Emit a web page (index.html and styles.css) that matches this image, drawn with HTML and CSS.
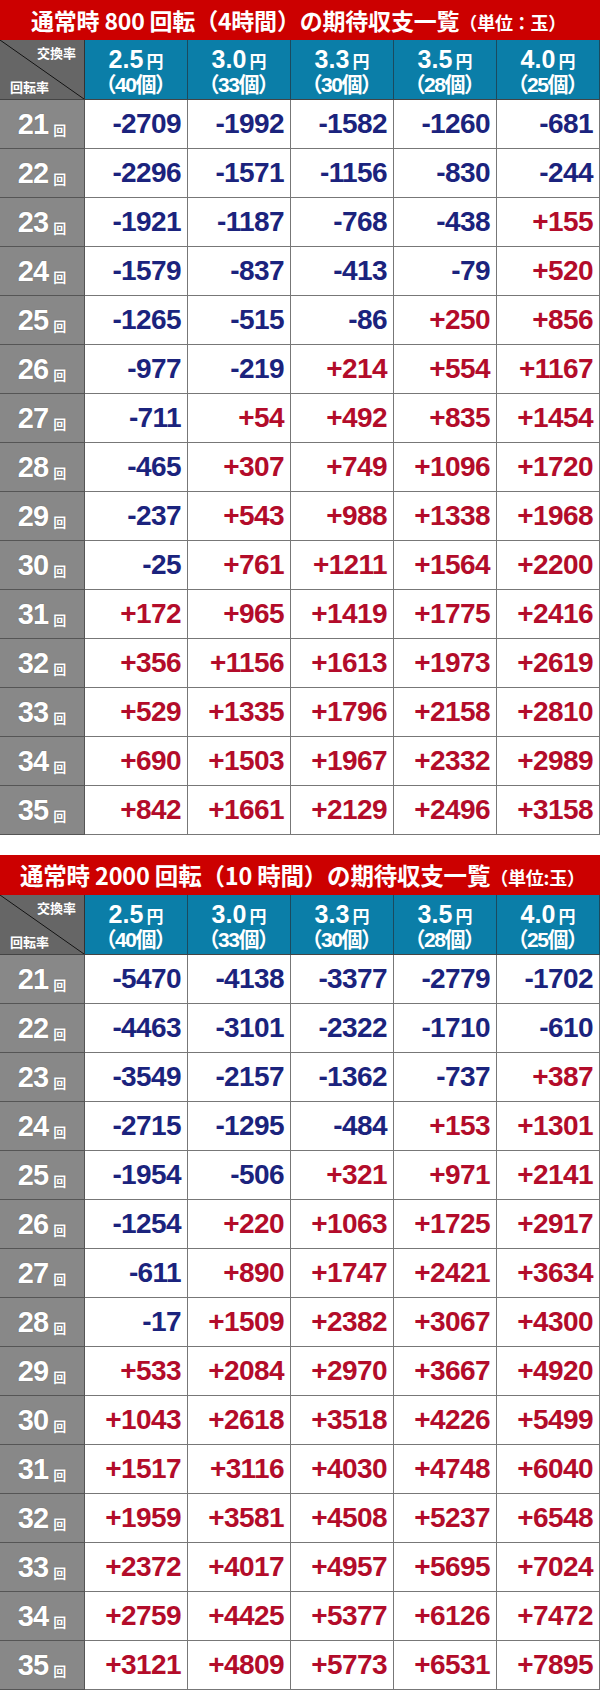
FILE: index.html
```html
<!DOCTYPE html>
<html lang="ja">
<head>
<meta charset="utf-8">
<title>期待収支一覧</title>
<link rel="stylesheet" href="styles.css">
</head>
<body>
<section class="block">
  <h2 class="title">通常時 800 回転（4時間）の期待収支一覧<span class="unit">（単位：玉）</span></h2>
  <div class="grid">
    <div class="corner"><span class="c-top">交換率</span><span class="c-bot">回転率</span></div>
    <div class="hd"><div class="rate">2.5<span class="yen">円</span></div><div class="cnt">（40個）</div></div>
    <div class="hd"><div class="rate">3.0<span class="yen">円</span></div><div class="cnt">（33個）</div></div>
    <div class="hd"><div class="rate">3.3<span class="yen">円</span></div><div class="cnt">（30個）</div></div>
    <div class="hd"><div class="rate">3.5<span class="yen">円</span></div><div class="cnt">（28個）</div></div>
    <div class="hd"><div class="rate">4.0<span class="yen">円</span></div><div class="cnt">（25個）</div></div>

    <div class="rl">21<span class="kai">回</span></div><div class="v m">-2709</div><div class="v m">-1992</div><div class="v m">-1582</div><div class="v m">-1260</div><div class="v m">-681</div>
    <div class="rl">22<span class="kai">回</span></div><div class="v m">-2296</div><div class="v m">-1571</div><div class="v m">-1156</div><div class="v m">-830</div><div class="v m">-244</div>
    <div class="rl">23<span class="kai">回</span></div><div class="v m">-1921</div><div class="v m">-1187</div><div class="v m">-768</div><div class="v m">-438</div><div class="v p">+155</div>
    <div class="rl">24<span class="kai">回</span></div><div class="v m">-1579</div><div class="v m">-837</div><div class="v m">-413</div><div class="v m">-79</div><div class="v p">+520</div>
    <div class="rl">25<span class="kai">回</span></div><div class="v m">-1265</div><div class="v m">-515</div><div class="v m">-86</div><div class="v p">+250</div><div class="v p">+856</div>
    <div class="rl">26<span class="kai">回</span></div><div class="v m">-977</div><div class="v m">-219</div><div class="v p">+214</div><div class="v p">+554</div><div class="v p">+1167</div>
    <div class="rl">27<span class="kai">回</span></div><div class="v m">-711</div><div class="v p">+54</div><div class="v p">+492</div><div class="v p">+835</div><div class="v p">+1454</div>
    <div class="rl">28<span class="kai">回</span></div><div class="v m">-465</div><div class="v p">+307</div><div class="v p">+749</div><div class="v p">+1096</div><div class="v p">+1720</div>
    <div class="rl">29<span class="kai">回</span></div><div class="v m">-237</div><div class="v p">+543</div><div class="v p">+988</div><div class="v p">+1338</div><div class="v p">+1968</div>
    <div class="rl">30<span class="kai">回</span></div><div class="v m">-25</div><div class="v p">+761</div><div class="v p">+1211</div><div class="v p">+1564</div><div class="v p">+2200</div>
    <div class="rl">31<span class="kai">回</span></div><div class="v p">+172</div><div class="v p">+965</div><div class="v p">+1419</div><div class="v p">+1775</div><div class="v p">+2416</div>
    <div class="rl">32<span class="kai">回</span></div><div class="v p">+356</div><div class="v p">+1156</div><div class="v p">+1613</div><div class="v p">+1973</div><div class="v p">+2619</div>
    <div class="rl">33<span class="kai">回</span></div><div class="v p">+529</div><div class="v p">+1335</div><div class="v p">+1796</div><div class="v p">+2158</div><div class="v p">+2810</div>
    <div class="rl">34<span class="kai">回</span></div><div class="v p">+690</div><div class="v p">+1503</div><div class="v p">+1967</div><div class="v p">+2332</div><div class="v p">+2989</div>
    <div class="rl">35<span class="kai">回</span></div><div class="v p">+842</div><div class="v p">+1661</div><div class="v p">+2129</div><div class="v p">+2496</div><div class="v p">+3158</div>
  </div>
</section>

<section class="block second">
  <h2 class="title t2">通常時 2000 回転（10 時間）の期待収支一覧<span class="unit">（単位:玉）</span></h2>
  <div class="grid">
    <div class="corner"><span class="c-top">交換率</span><span class="c-bot">回転率</span></div>
    <div class="hd"><div class="rate">2.5<span class="yen">円</span></div><div class="cnt">（40個）</div></div>
    <div class="hd"><div class="rate">3.0<span class="yen">円</span></div><div class="cnt">（33個）</div></div>
    <div class="hd"><div class="rate">3.3<span class="yen">円</span></div><div class="cnt">（30個）</div></div>
    <div class="hd"><div class="rate">3.5<span class="yen">円</span></div><div class="cnt">（28個）</div></div>
    <div class="hd"><div class="rate">4.0<span class="yen">円</span></div><div class="cnt">（25個）</div></div>

    <div class="rl">21<span class="kai">回</span></div><div class="v m">-5470</div><div class="v m">-4138</div><div class="v m">-3377</div><div class="v m">-2779</div><div class="v m">-1702</div>
    <div class="rl">22<span class="kai">回</span></div><div class="v m">-4463</div><div class="v m">-3101</div><div class="v m">-2322</div><div class="v m">-1710</div><div class="v m">-610</div>
    <div class="rl">23<span class="kai">回</span></div><div class="v m">-3549</div><div class="v m">-2157</div><div class="v m">-1362</div><div class="v m">-737</div><div class="v p">+387</div>
    <div class="rl">24<span class="kai">回</span></div><div class="v m">-2715</div><div class="v m">-1295</div><div class="v m">-484</div><div class="v p">+153</div><div class="v p">+1301</div>
    <div class="rl">25<span class="kai">回</span></div><div class="v m">-1954</div><div class="v m">-506</div><div class="v p">+321</div><div class="v p">+971</div><div class="v p">+2141</div>
    <div class="rl">26<span class="kai">回</span></div><div class="v m">-1254</div><div class="v p">+220</div><div class="v p">+1063</div><div class="v p">+1725</div><div class="v p">+2917</div>
    <div class="rl">27<span class="kai">回</span></div><div class="v m">-611</div><div class="v p">+890</div><div class="v p">+1747</div><div class="v p">+2421</div><div class="v p">+3634</div>
    <div class="rl">28<span class="kai">回</span></div><div class="v m">-17</div><div class="v p">+1509</div><div class="v p">+2382</div><div class="v p">+3067</div><div class="v p">+4300</div>
    <div class="rl">29<span class="kai">回</span></div><div class="v p">+533</div><div class="v p">+2084</div><div class="v p">+2970</div><div class="v p">+3667</div><div class="v p">+4920</div>
    <div class="rl">30<span class="kai">回</span></div><div class="v p">+1043</div><div class="v p">+2618</div><div class="v p">+3518</div><div class="v p">+4226</div><div class="v p">+5499</div>
    <div class="rl">31<span class="kai">回</span></div><div class="v p">+1517</div><div class="v p">+3116</div><div class="v p">+4030</div><div class="v p">+4748</div><div class="v p">+6040</div>
    <div class="rl">32<span class="kai">回</span></div><div class="v p">+1959</div><div class="v p">+3581</div><div class="v p">+4508</div><div class="v p">+5237</div><div class="v p">+6548</div>
    <div class="rl">33<span class="kai">回</span></div><div class="v p">+2372</div><div class="v p">+4017</div><div class="v p">+4957</div><div class="v p">+5695</div><div class="v p">+7024</div>
    <div class="rl">34<span class="kai">回</span></div><div class="v p">+2759</div><div class="v p">+4425</div><div class="v p">+5377</div><div class="v p">+6126</div><div class="v p">+7472</div>
    <div class="rl">35<span class="kai">回</span></div><div class="v p">+3121</div><div class="v p">+4809</div><div class="v p">+5773</div><div class="v p">+6531</div><div class="v p">+7895</div>
  </div>
</section>
</body>
</html>
```

FILE: styles.css
```css
html, body {
  margin: 0;
  padding: 0;
  background: #ffffff;
}
body {
  width: 600px;
  font-family: "Liberation Sans", "Noto Sans CJK JP", sans-serif;
}
.block {
  width: 600px;
}
.second {
  margin-top: 20px;
}
.title {
  margin: 0;
  height: 40px;
  background: #cc0000;
  color: #ffffff;
  font-family: "Noto Sans CJK JP", sans-serif;
  font-weight: 700;
  font-size: 23px;
  line-height: 40px;
  padding-left: 31px;
  white-space: nowrap;
  letter-spacing: -0.2px;
}
.t2 {
  padding-left: 20px;
  font-size: 23.5px;
}
.unit {
  font-size: 18px;
}
.grid {
  display: grid;
  grid-template-columns: 85px repeat(5, 103px);
  grid-template-rows: 60px;
  grid-auto-rows: 49px;
}
.grid > div {
  box-sizing: border-box;
  border-right: 1px solid #777777;
  border-bottom: 1px solid #777777;
}
.corner {
  position: relative;
  background: linear-gradient(to top right, #666666 calc(50% - 0.8px), #111111 50%, #666666 calc(50% + 0.8px));
  color: #ffffff;
  font-family: "Noto Sans CJK JP", sans-serif;
  font-weight: 700;
  font-size: 13px;
  line-height: 1;
  border-right-color: #333333 !important;
  border-bottom-color: #444444 !important;
}
.c-top {
  position: absolute;
  top: 6px;
  right: 8px;
}
.c-bot {
  position: absolute;
  left: 10px;
  bottom: 6px;
}
.hd {
  background: #0b7ea8;
  color: #ffffff;
  text-align: center;
  font-weight: 700;
  border-right-color: #1b4a5e !important;
  border-bottom-color: #444444 !important;
  padding-top: 7px;
}
.rate {
  font-family: "Liberation Sans", sans-serif;
  font-size: 25px;
  line-height: 24px;
}
.yen {
  font-family: "Noto Sans CJK JP", sans-serif;
  font-size: 17px;
  margin-left: 3px;
}
.cnt {
  font-family: "Liberation Sans", "Noto Sans CJK JP", sans-serif;
  font-size: 21px;
  line-height: 24px;
  letter-spacing: -1.5px;
  margin-left: -2px;
}
.rl {
  background: #888888;
  color: #ffffff;
  display: flex;
  align-items: center;
  justify-content: center;
  font-weight: 700;
  font-size: 29px;
  letter-spacing: -1px;
  text-shadow: 0 0 1px rgba(0, 0, 0, 0.35);
  border-right-color: #555555 !important;
  border-bottom-color: #555555 !important;
}
.kai {
  font-family: "Noto Sans CJK JP", sans-serif;
  font-size: 13px;
  margin-left: 5px;
  margin-top: 10px;
  letter-spacing: 0;
}
.v {
  background: #ffffff;
  display: flex;
  align-items: center;
  justify-content: flex-end;
  padding-right: 6px;
  font-weight: 700;
  font-size: 28px;
  letter-spacing: -0.6px;
}
.m {
  color: #1b237d;
}
.p {
  color: #b30c2a;
}
```
